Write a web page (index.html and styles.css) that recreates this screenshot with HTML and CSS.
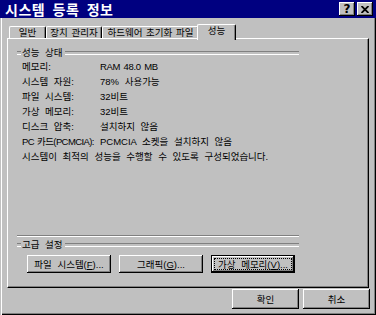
FILE: index.html
```html
<!DOCTYPE html>
<html lang="ko">
<head>
    <meta charset="UTF-8">
    <meta name="viewport" content="width=device-width, initial-scale=1.0">
    <title>시스템 등록 정보</title>
    <link rel="stylesheet" href="styles.css">
</head>
<body>
    <div class="window">
        <div class="title-bar">
            <span class="title">시스템 등록 정보</span>
            <div class="title-buttons">
                <button class="title-btn help">?</button>
                <button class="title-btn">
                    <svg width="8" height="7" viewBox="0 0 8 7">
                        <path d="M0.5 0 L7.5 7 M7.5 0 L0.5 7" stroke="#000" stroke-width="1.8" fill="none"/>
                    </svg>
                </button>
            </div>
        </div>
        <div class="dialog">
            <div class="tabs">
                <div class="tab tab-general">일반</div>
                <div class="tab tab-devices">장치 관리자</div>
                <div class="tab tab-profiles">하드웨어 초기화 파일</div>
                <div class="tab tab-perf active">성능</div>
            </div>
            <div class="panel">
                <div class="group-head"><span>성능 상태</span></div>
                <div class="info">
                    <div>메모리:</div><div class="latin">RAM 48.0 MB</div>
                    <div>시스템 자원:</div><div>78% 사용가능</div>
                    <div>파일 시스템:</div><div>32비트</div>
                    <div>가상 메모리:</div><div>32비트</div>
                    <div>디스크 압축:</div><div>설치하지 않음</div>
                    <div class="latin narrow">PC 카드(PCMCIA):</div><div>PCMCIA 소켓을 설치하지 않음</div>
                    <div class="note">시스템이 최적의 성능을 수행할 수 있도록 구성되었습니다.</div>
                </div>
                <div class="separator"></div>
                <div class="group-head advanced"><span>고급 설정</span></div>
                <div class="adv-buttons">
                    <button class="btn adv">파일 시스템(<u>F</u>)...</button>
                    <button class="btn adv">그래픽(<u>G</u>)...</button>
                    <button class="btn adv default"><span class="focus">가상 메모리(<u>V</u>)...</span></button>
                </div>
            </div>
            <div class="actions">
                <button class="btn action">확인</button>
                <button class="btn action">취소</button>
            </div>
        </div>
    </div>
</body>
</html>
```
FILE: styles.css
```css
* {
    box-sizing: border-box;
}

body {
    margin: 0;
    background-color: #c0c0c0;
    font-family: "Liberation Sans", "Noto Sans CJK KR", sans-serif;
    font-size: 9.5px;
    color: #000;
}

.window {
    width: 376px;
    height: 315px;
    background-color: #c0c0c0;
    display: flex;
    flex-direction: column;
    box-shadow: inset 1px 0 #c0c0c0, inset 2px 0 #ffffff,
                inset -1px -1px #000000, inset -2px -2px #808080;
}

.title-bar {
    height: 18px;
    background-color: #000080;
    color: #ffffff;
    display: flex;
    align-items: center;
    justify-content: space-between;
    padding: 0 3px 0 5px;
}

.title {
    font-family: "Noto Sans CJK KR", sans-serif;
    font-size: 14px;
    font-weight: bold;
    letter-spacing: 0.5px;
    word-spacing: 3px;
    line-height: 18px;
}

.title-buttons {
    display: flex;
    gap: 2px;
}

.title-btn {
    width: 16px;
    height: 14px;
    padding: 0;
    border: 0;
    background-color: #c0c0c0;
    box-shadow: inset -1px -1px #000000, inset 1px 1px #ffffff, inset -2px -2px #808080;
    display: flex;
    align-items: center;
    justify-content: center;
}

.help {
    font: bold 12px "DejaVu Sans", sans-serif;
    line-height: 14px;
}

.dialog {
    flex: 1;
    display: flex;
    flex-direction: column;
    padding: 6px 7px 0 7px;
}

/* tabs */
.tabs {
    display: flex;
    align-items: flex-end;
    height: 14px;
    padding-left: 2px;
    word-spacing: 1px;
}

.tab {
    height: 12px;
    border: 1px solid #ffffff;
    border-bottom: 0;
    border-right-color: #000000;
    border-radius: 2px 2px 0 0;
    box-shadow: inset -1px 0 #808080;
    display: flex;
    align-items: center;
    justify-content: center;
    line-height: 10px;
    white-space: nowrap;
}

.tab-general { width: 37px; }
.tab-devices { width: 56px; }
.tab-profiles { width: 97px; }

.tab.active {
    width: 39px;
    height: 16px;
    margin-left: -2px;
    margin-bottom: -2px;
    position: relative;
    z-index: 1;
    background-color: #c0c0c0;
    align-items: flex-start;
    padding-top: 1px;
}

/* panel */
.panel {
    height: 250px;
    border: 1px solid;
    border-color: #ffffff #000000 #000000 #ffffff;
    box-shadow: inset -1px -1px #808080;
    display: flex;
    flex-direction: column;
    padding: 9px 69px 14px 9px;
    word-spacing: 3px;
}

.group-head {
    display: flex;
    align-items: center;
    height: 10px;
}

.group-head::before,
.group-head::after,
.separator {
    content: "";
    height: 2px;
    border-top: 1px solid #808080;
    border-bottom: 1px solid #ffffff;
}

.group-head::before {
    width: 4px;
}

.group-head::after {
    flex: 1;
}

.group-head span {
    padding: 0 2px 0 1px;
    line-height: 10px;
}

.info {
    display: grid;
    grid-template-columns: 78px auto;
    grid-auto-rows: 15px;
    line-height: 15px;
    margin-top: 1px;
    padding-left: 5px;
    white-space: nowrap;
}

.info .latin {
    word-spacing: 1px;
    letter-spacing: -0.3px;
}

.info .narrow {
    letter-spacing: -0.6px;
}

.note {
    grid-column: 1 / -1;
}

.separator {
    margin-top: auto;
    margin-bottom: 3px;
}

.adv-buttons {
    display: flex;
    gap: 8px;
    margin-top: 5px;
    padding-left: 10px;
}

/* buttons */
.btn {
    background-color: #c0c0c0;
    border: 0;
    padding: 0;
    font-family: inherit;
    font-size: inherit;
    word-spacing: inherit;
    color: #000;
    box-shadow: inset -1px -1px #000000, inset 1px 1px #ffffff, inset -2px -2px #808080;
    display: flex;
    align-items: center;
    justify-content: center;
    white-space: nowrap;
}

.btn u {
    text-underline-offset: 1px;
}

.adv {
    width: 84px;
    height: 18px;
}

.btn.default {
    border: 1px solid #000000;
    padding: 2px;
}

.focus {
    flex: 1;
    align-self: stretch;
    border: 1px dotted #000000;
    display: flex;
    align-items: center;
    justify-content: center;
}

.actions {
    display: flex;
    justify-content: flex-end;
    gap: 4px;
    margin-top: 1px;
    margin-right: -1px;
    word-spacing: 3px;
}

.action {
    width: 67px;
    height: 20px;
}
```
